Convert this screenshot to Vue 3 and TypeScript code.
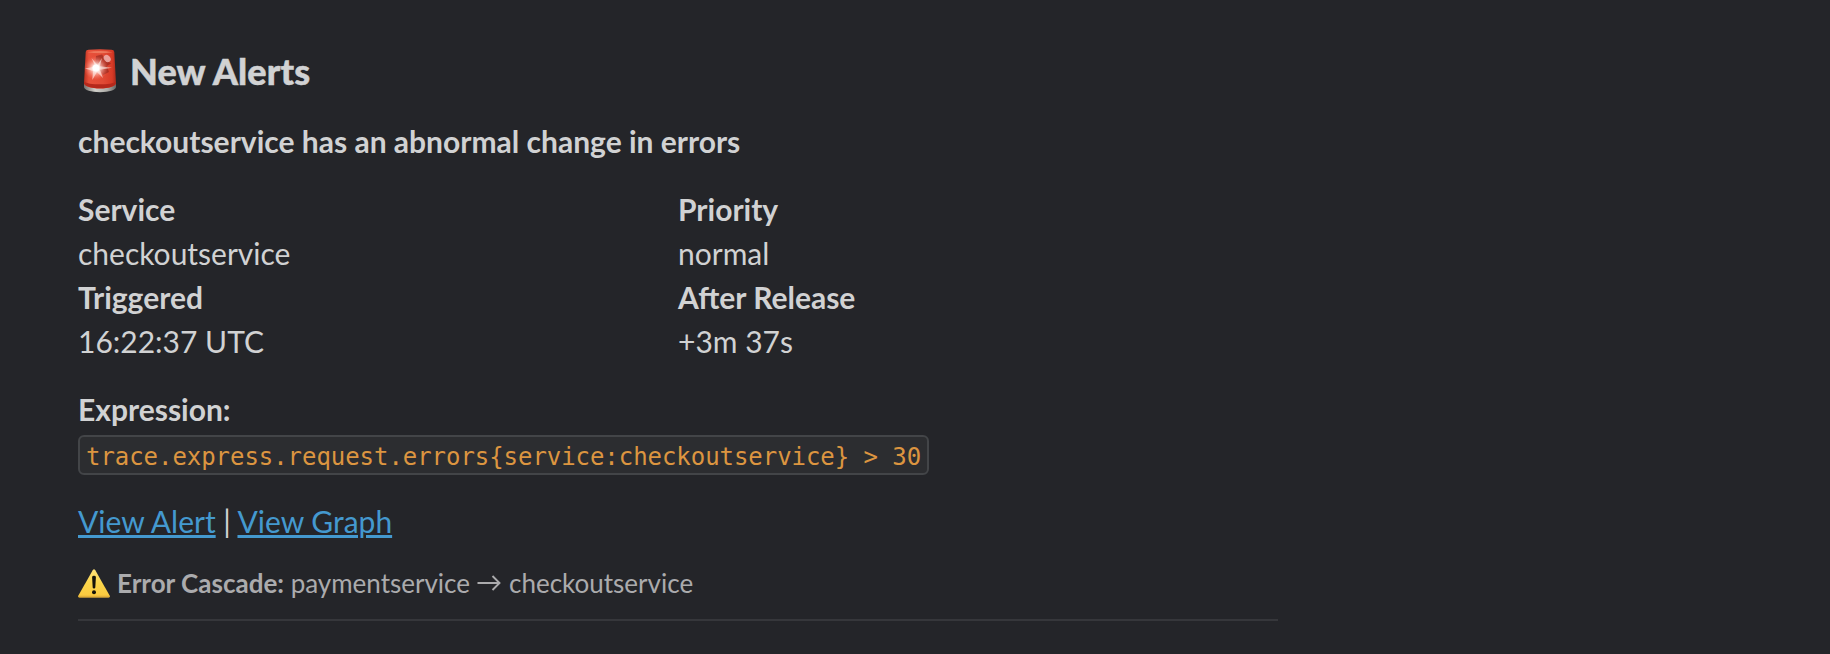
<script setup lang="ts">
interface Field {
  label: string
  value: string
}

const fields: Field[] = [
  { label: 'Service', value: 'checkoutservice' },
  { label: 'Priority', value: 'normal' },
  { label: 'Triggered', value: '16:22:37 UTC' },
  { label: 'After Release', value: '+3m 37s' },
]
const expression = 'trace.express.request.errors{service:checkoutservice} > 30'
</script>

<template>
  <main class="message">
    <h1 class="heading">
      <svg class="siren" viewBox="0 0 44 44" aria-hidden="true">
        <defs>
          <linearGradient id="glass" x1="0" x2="1" y1="0" y2="0">
            <stop offset="0" stop-color="#b9311f" />
            <stop offset=".15" stop-color="#e8503a" />
            <stop offset=".6" stop-color="#e04a35" />
            <stop offset=".88" stop-color="#d83a26" />
            <stop offset="1" stop-color="#a92a1c" />
          </linearGradient>
          <linearGradient id="metal" x1="0" x2="1" y1="0" y2="0">
            <stop offset="0" stop-color="#73716e" />
            <stop offset=".35" stop-color="#d0cfca" />
            <stop offset=".75" stop-color="#aaa9a5" />
            <stop offset="1" stop-color="#656563" />
          </linearGradient>
          <radialGradient id="glow">
            <stop offset="0" stop-color="#fff" />
            <stop offset=".3" stop-color="#ffe5df" stop-opacity=".9" />
            <stop offset="1" stop-color="#ff7662" stop-opacity="0" />
          </radialGradient>
        </defs>
        <path d="M6 34.5V38c0 3 7 5.2 16 5.2S38 41 38 38v-3.5z" fill="url(#metal)" />
        <path d="M7.700 3Q7.900.8 10.500.7Q22-.4 33.500.7q2.600.1 2.800 2.300L38 34c-.2 3.300-7 5.500-16 5.500S6.200 37.300 6 34z" fill="url(#glass)" />
        <path d="M6.300 32.500c3 3.800 28.400 3.800 31.400 0l.2 2c-1 3-7.400 4.800-15.900 4.800S7 37.500 6.100 34.500z" fill="#b5281b" />
        <path d="M9.500 3.300Q22 .6 34.500 3.300Q22 5 9.500 3.300z" fill="#f28a6c" opacity=".7" />
        <path d="M18 7l6-1.500 4 5.500 5 3.500-4 2.500 2 6-6 3-3-5-5-3z" fill="#8e251d" opacity=".6" />
        <ellipse cx="29.200" cy="9.500" rx="4" ry="3.100" fill="#efb1ae" opacity=".85" transform="rotate(50 29.200 9.500)" />
        <circle cx="18" cy="19" r="12" fill="url(#glow)" />
        <path d="M18 18.800L13.500 9l6 7 4.500-7-2.200 8.300L34 18.800l-12.200 2L25 29l-6-6-4.700 8 .7-9-8-2.500 8-1.500z" fill="#fff3ef" opacity=".6" />
        <circle cx="18" cy="19" r="3.500" fill="#fff" />
      </svg>
      <span>New Alerts</span>
    </h1>

    <p class="line title"><b>checkoutservice has an abnormal change in errors</b></p>

    <dl class="fields">
      <div v-for="field in fields" :key="field.label" class="field">
        <dt>{{ field.label }}</dt>
        <dd>{{ field.value }}</dd>
      </div>
    </dl>

    <section class="expression">
      <p class="line"><b>Expression:</b></p>
      <code class="code">{{ expression }}</code>
    </section>

    <p class="line links"><a>View Alert</a> | <a>View Graph</a></p>

    <div class="context">
      <svg class="warning" viewBox="0 0 32 29" aria-hidden="true">
        <defs>
          <linearGradient id="amber" x1="0" x2="0" y1="0" y2="1">
            <stop offset="0" stop-color="#ffe27a" />
            <stop offset=".5" stop-color="#fbd54a" />
            <stop offset="1" stop-color="#fac83e" />
          </linearGradient>
        </defs>
        <path d="M14.700 1.200Q16-.8 17.300 1.200L31.600 26.500Q32.500 28.500 30.500 28.500h-29Q-.5 28.500.4 26.500z" fill="url(#amber)" />
        <path d="M.5 26.800h31q.5 1.700-1 1.700h-29Q0 28.500.5 26.800z" fill="#d9a437" opacity=".65" />
        <path d="M14.100 8.200q0-1.400 1.900-1.400t1.900 1.400l-.6 10.300q0 1.100-1.300 1.100t-1.300-1.100z" fill="#15130a" />
        <circle cx="16" cy="23.300" r="2" fill="#15130a" />
      </svg>
      <span><b>Error Cascade:</b> paymentservice</span>
      <svg class="arrow" viewBox="0 0 24 18" role="img" aria-label="to">
        <path d="M.5 9h21.500M15.500 2l7 7-7 7" fill="none" stroke="currentColor" stroke-width="1.900" />
      </svg>
      <span>checkoutservice</span>
    </div>
    <hr class="rule" />
  </main>
</template>

<style>
html,
body {
  background: #242529;
}
</style>

<style scoped>
.message {
  box-sizing: border-box;
  width: 1278px;
  padding: 49px 0 0 78px;
  color: #d1d2d3;
  font: 400 30px/44px Lato, 'Noto Sans', sans-serif;
}
b,
dt {
  font-weight: 700;
}
.heading {
  display: flex;
  align-items: flex-start;
  gap: 8px;
  height: 44px;
  margin: 0;
  font-size: 36px;
  font-weight: 900;
  letter-spacing: 0.15px;
  -webkit-text-stroke: 0.5px #d1d2d3;
}
.siren {
  width: 44px;
  height: 44px;
  flex: none;
}
.line {
  margin: 0;
}
.title {
  margin-top: 26px;
}
.fields {
  display: grid;
  grid-template-columns: 600px 600px;
  margin: 24px 0;
}
dd {
  margin: 0;
}
.expression {
  height: 88px;
}
.code {
  display: block;
  box-sizing: border-box;
  width: 851px;
  height: 40px;
  margin-top: 4px;
  padding: 2px 6px 0;
  border: 2px solid #434548;
  border-radius: 6px;
  background: #2c2d30;
  color: #dc9540;
  font: 24px/36px 'DejaVu Sans Mono', monospace;
  letter-spacing: -0.05px;
  white-space: pre;
}
.links {
  margin-top: 24px;
}
a {
  color: #4499cf;
  text-decoration: underline;
  text-decoration-thickness: 3px;
}
.context {
  display: flex;
  align-items: center;
  height: 36px;
  margin-top: 22px;
  color: #ababad;
  font-size: 26px;
  line-height: 36px;
}
.warning {
  width: 32px;
  height: 29px;
  margin-right: 7px;
}
.arrow {
  width: 24px;
  height: 18px;
  margin: 0 8px 0 7px;
}
.rule {
  height: 2px;
  margin: 18px 0 0;
  border: 0;
  background: #36373b;
}
</style>
